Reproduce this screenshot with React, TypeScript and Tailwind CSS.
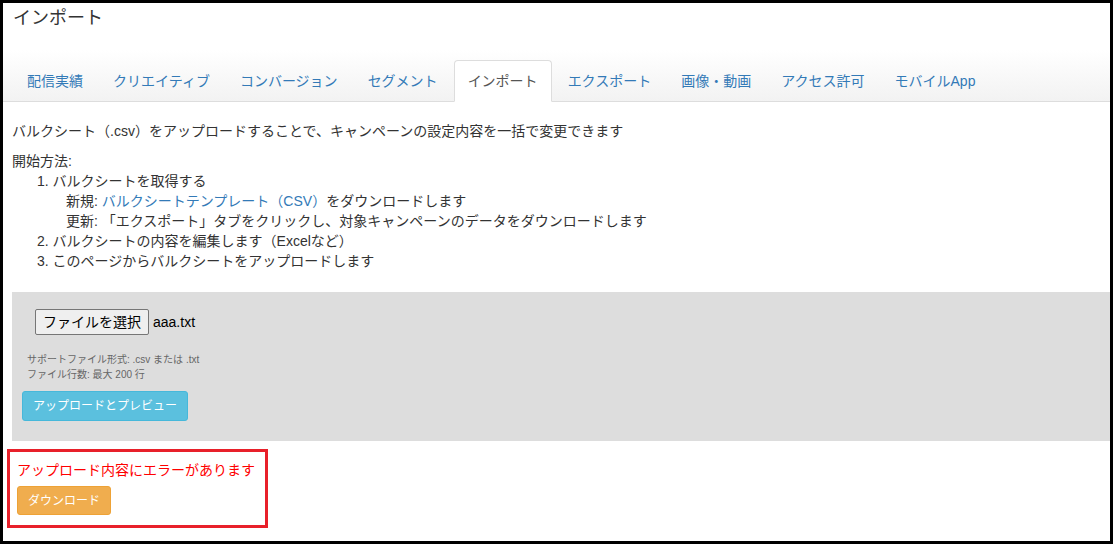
import React from "react";

const tabs = [
  "配信実績",
  "クリエイティブ",
  "コンバージョン",
  "セグメント",
  "インポート",
  "エクスポート",
  "画像・動画",
  "アクセス許可",
  "モバイルApp",
];

const font = "font-['Liberation_Sans','Noto_Sans_CJK_JP',sans-serif]";

export default function App() {
  const active = "インポート";

  return (
    <div className={`w-[1113px] h-[544px] border-[3px] border-black bg-white text-[#333] overflow-hidden ${font}`}>
      {/* Page title */}
      <h1 className="pt-[2px] pl-[10px] text-[18px] leading-[26px] font-normal">インポート</h1>

      {/* Tabs */}
      <div className="mt-[19px] pt-[10px] bg-gradient-to-b from-white to-[#f2f2f2]">
        <ul className="flex pl-[10px] border-b border-[#ddd]">
          {tabs.map((t) => {
            const isActive = t === active;
            return (
              <li key={t} className="mr-[2px] -mb-px">
                <a
                  className={`block px-[13px] py-[10px] text-[14px] leading-[20px] rounded-t-[4px] border ${
                    isActive
                      ? "bg-white border-[#ddd] border-b-white text-[#555]"
                      : "border-transparent text-[#337ab7]"
                  }`}
                >
                  {t}
                </a>
              </li>
            );
          })}
        </ul>
      </div>

      <div className="pl-[9px] text-[14px] leading-[20px]">
        <p className="mt-[19px]">
          バルクシート（.csv）をアップロードすることで、キャンペーンの設定内容を一括で変更できます
        </p>

        {/* How to start */}
        <div className="mt-[10px]">
          <div>開始方法:</div>
          <div className="pl-[25px]">1. バルクシートを取得する</div>
          <div className="pl-[54px]">
            新規: <a className="text-[#337ab7]">バルクシートテンプレート（CSV）</a>をダウンロードします
          </div>
          <div className="pl-[54px]">
            更新: 「エクスポート」タブをクリックし、対象キャンペーンのデータをダウンロードします
          </div>
          <div className="pl-[25px]">2. バルクシートの内容を編集します（Excelなど）</div>
          <div className="pl-[25px]">3. このページからバルクシートをアップロードします</div>
        </div>

        {/* Upload panel */}
        <div className="mt-[21px] bg-[#ddd] pt-[17px] pb-[20px] pl-[10px]">
          <div className="flex items-center ml-[13px]">
            <button className="h-[26px] px-[7px] bg-[#efefef] border border-[#767676] rounded-[2px] text-[14px] text-black">
              ファイルを選択
            </button>
            <span className="ml-[4px] text-[14px] text-black">aaa.txt</span>
          </div>
          <div className="mt-[17px] pl-[5px] text-[10px] leading-[15px] text-[#666]">
            <div>サポートファイル形式: .csv または .txt</div>
            <div>ファイル行数: 最大 200 行</div>
          </div>
          <button className="mt-[9px] h-[30px] px-[10px] rounded-[3px] bg-[#5bc0de] border border-[#46b8da] text-white text-[12px]">
            アップロードとプレビュー
          </button>
        </div>
      </div>

      {/* Upload error */}
      <div className="mt-[8px] ml-[4px] w-[261px] border-[3px] border-[#e8202a] pt-[8px] pb-[10px] pl-[7px]">
        <div className="text-[14px] leading-[20px] text-[#ff0000]">アップロード内容にエラーがあります</div>
        <button className="mt-[6px] h-[29px] px-[10px] rounded-[3px] bg-[#f0ad4e] border border-[#eea236] text-white text-[12px]">
          ダウンロード
        </button>
      </div>
    </div>
  );
}
